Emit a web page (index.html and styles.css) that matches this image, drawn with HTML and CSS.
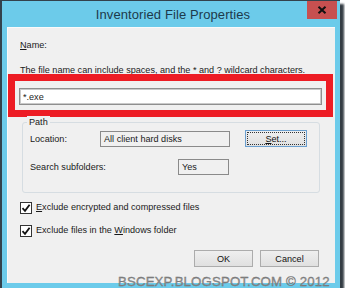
FILE: index.html
```html
<!DOCTYPE html>
<html lang="en">
<head>
  <meta charset="UTF-8">
  <title>Inventoried File Properties</title>
  <link rel="stylesheet" href="styles.css">
</head>
<body>
  <div class="window">
    <div class="titlebar">
      <span class="title">Inventoried File Properties</span>
      <span class="close"><svg width="10" height="8" viewBox="0 0 10 8"><path d="M1.5 0.8 L8.5 7.2 M8.5 0.8 L1.5 7.2" stroke="#111" stroke-width="2"/></svg></span>
    </div>

    <div class="content">
      <div class="name"><u>N</u>ame:</div>
      <div class="desc">The file name can include spaces, and the * and ? wildcard characters.</div>

      <div class="highlight">
        <div class="textbox name-input">*.exe</div>
      </div>

      <div class="group">
        <span class="legend">Path</span>
        <div class="row">
          <span class="label loc-label">Location:</span>
          <div class="textbox readonly loc-box">All client hard disks</div>
          <button class="btn set-btn"><u>S</u>et...</button>
        </div>
        <div class="row sub-row">
          <span class="label sub-label">Search subfolders:</span>
          <div class="textbox readonly yes-box">Yes</div>
        </div>
      </div>

      <label class="check first">
        <span class="box"><svg width="10" height="10" viewBox="0 0 10 10"><path d="M1.5 5.2 L4 7.8 L8.6 1.8" fill="none" stroke="#111" stroke-width="1.8"/></svg></span>
        <span><u>E</u>xclude encrypted and compressed files</span>
      </label>
      <label class="check">
        <span class="box"><svg width="10" height="10" viewBox="0 0 10 10"><path d="M1.5 5.2 L4 7.8 L8.6 1.8" fill="none" stroke="#111" stroke-width="1.8"/></svg></span>
        <span>Exclude files in the <u>W</u>indows folder</span>
      </label>

      <div class="actions">
        <button class="btn">OK</button>
        <button class="btn">Cancel</button>
      </div>
    </div>

    <div class="watermark">BSCEXP.BLOGSPOT.COM &copy; 2012</div>
  </div>
</body>
</html>
```

FILE: styles.css
```css
body {
  margin: 0;
  background: #fff;
  font-family: "Liberation Sans", Arial, sans-serif;
}
.window {
  position: relative;
  width: 338px;
  height: 287px;
  background: #6ccbea;
  border-left: 2px solid #33424c;
  border-top: 1px solid #33424c;
  box-shadow: 4px 4px 2px rgba(30, 40, 48, 0.9);
}
.titlebar {
  height: 26px;
  display: flex;
  justify-content: center;
  align-items: center;
}
.title {
  font-size: 13px;
  color: #1d3a4b;
  margin-left: 4px;
  letter-spacing: 0.1px;
}
.close {
  position: absolute;
  top: 0;
  right: 3px;
  width: 30px;
  height: 18px;
  background: #c75050;
  display: flex;
  align-items: center;
  justify-content: center;
}
.content {
  margin-left: 5px;
  width: 328px;
  height: 256px;
  background: #f0f0f0;
  box-sizing: border-box;
  border-top: 1px solid #fafafa;
  border-left: 1px solid #fafafa;
  font-size: 9.1px;
  color: #1a1a1a;
  display: flex;
  flex-direction: column;
}
.name {
  margin: 11px 0 0 12px;
  line-height: 12px;
}
.desc {
  margin: 13px 0 0 12px;
  line-height: 12px;
}
.highlight {
  margin: -2px 0 0 0;
  width: 325px;
  height: 43px;
  box-sizing: border-box;
  border: 7px solid #ed1c24;
  padding: 7px 4px 0 4px;
}
.textbox {
  box-sizing: border-box;
  border: 1px solid #8f8f8f;
  background: #fff;
  padding: 0 3px;
  display: flex;
  align-items: center;
}
.name-input {
  height: 17px;
  box-shadow: inset 0 0 0 1px #c9c9c9;
}
.group {
  position: relative;
  margin: 5px 0 0 14px;
  width: 298px;
  height: 71px;
  box-sizing: border-box;
  border: 1px solid #d6dde2;
  border-radius: 3px;
}
.legend {
  position: absolute;
  top: -7px;
  left: 4px;
  padding: 0 2px;
  background: #f0f0f0;
  line-height: 12px;
}
.row {
  display: flex;
  align-items: center;
  padding-left: 7px;
}
.row:first-of-type {
  margin-top: 7px;
}
.label {
  flex: none;
}
.loc-label {
  width: 70px;
}
.sub-label {
  width: 148px;
}
.readonly {
  background: #f0f0f0;
  border-color: #8a8a8a;
  height: 16px;
}
.loc-box {
  width: 130px;
}
.yes-box {
  width: 51px;
}
.sub-row {
  margin-top: 12px;
}
.btn {
  font-family: inherit;
  font-size: 9.1px;
  color: #111;
  height: 17px;
  padding: 0;
  border: 1px solid #acacac;
  background: linear-gradient(#efefef, #e0e0e0);
}
.set-btn {
  margin-left: 15px;
  width: 62px;
  border-color: #6a9fcf;
  outline: 1px dotted #333;
  outline-offset: -3px;
}
.check {
  display: flex;
  align-items: center;
  gap: 4px;
  margin: 10px 0 0 12px;
  line-height: 13px;
}
.check.first {
  margin-top: 8px;
}
.box {
  width: 12px;
  height: 12px;
  box-sizing: border-box;
  border: 1px solid #333;
  background: #fff;
  display: flex;
  align-items: center;
  justify-content: center;
}
.actions {
  display: flex;
  justify-content: flex-end;
  gap: 7px;
  margin: 13px 16px 0 0;
}
.actions .btn {
  width: 59px;
}
.watermark {
  position: absolute;
  left: 116px;
  top: 273px;
  font-size: 13.3px;
  color: #8d8d8d;
  -webkit-text-stroke: 0.3px #6d6d6d;
  letter-spacing: 0.1px;
}
```
